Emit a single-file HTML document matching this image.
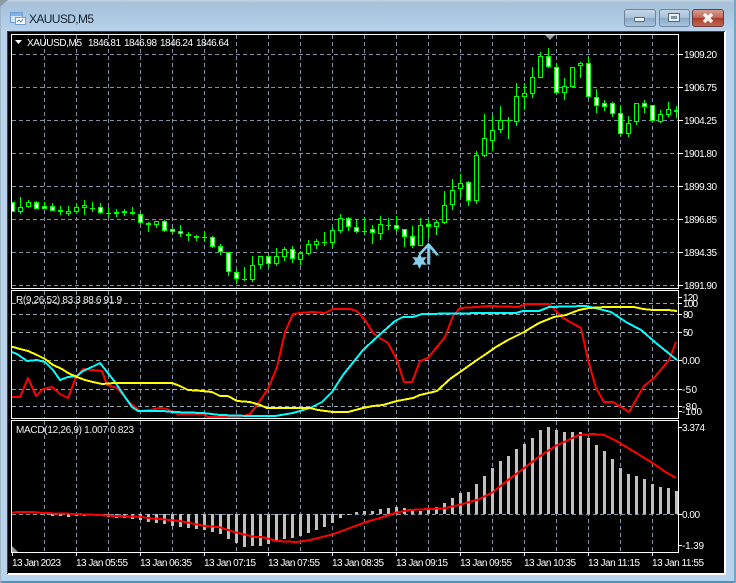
<!DOCTYPE html>
<html><head><meta charset="utf-8"><style>
html,body{margin:0;padding:0;background:#b9d2ea}
#w{position:relative;width:736px;height:583px;overflow:hidden;background:linear-gradient(180deg,#c2d2df 0,#a8c2d9 3px,#a9c5df 12px,#bad3ec 32px,#bad3ec 100%)}
#w>svg{position:absolute;left:0;top:0}
text{font-family:"Liberation Sans",sans-serif;font-size:10px;fill:#fff}
.t{font-size:12px;fill:#16202c}
.g{font-size:10px;fill:#f0f0f0}
</style></head><body><div id="w">
<svg width="736" height="583" viewBox="0 0 736 583">
<defs>
<linearGradient id="b" x1="0" y1="0" x2="0" y2="1"><stop offset="0" stop-color="#c5d6e6"/><stop offset=".48" stop-color="#a9c3da"/><stop offset=".5" stop-color="#8aa9c6"/><stop offset="1" stop-color="#a9c6e0"/></linearGradient>
<linearGradient id="r" x1="0" y1="0" x2="0" y2="1"><stop offset="0" stop-color="#d9a095"/><stop offset=".48" stop-color="#c0685a"/><stop offset=".5" stop-color="#a83a2a"/><stop offset="1" stop-color="#c46a55"/></linearGradient>
<clipPath id="c1"><rect x="12" y="35" width="666" height="253"/></clipPath>
<clipPath id="c2"><rect x="12" y="291" width="666" height="127"/></clipPath>
</defs>
<!-- window edges -->
<rect x="0" y="581" width="736" height="2" fill="#3a9dbb"/>
<rect x="734" y="0" width="2" height="583" fill="#6fa8c4"/>
<rect x="0" y="0" width="1" height="583" fill="#9fb6c8"/>
<path d="M0 0h8L0 7z" fill="#8a9aa6"/>
<!-- title icon -->
<path d="M10.5 12.5h12v10h-12z" fill="#d5e6f7" stroke="#6d9fd6"/>
<path d="M11 13h11v3H11z" fill="#7fb0e8"/>
<path d="M15.5 17.500h10v7h-10z" fill="#fff" stroke="#6d9fd6"/>
<path d="M17 22l2-2 2 2 2-3" fill="none" stroke="#4f8ad0"/>
<text class="t" x="29" y="23" textLength="65" lengthAdjust="spacing">XAUUSD,M5</text>
<!-- buttons -->
<rect x="624.500" y="9.500" width="31" height="17" rx="2.500" fill="url(#b)" stroke="#6d849b"/>
<rect x="659.500" y="9.500" width="30" height="17" rx="2.500" fill="url(#b)" stroke="#6d849b"/>
<rect x="692.500" y="9.500" width="31" height="17" rx="2.500" fill="url(#r)" stroke="#6b3a3a"/>
<rect x="634.500" y="17.500" width="10" height="4" rx="1" fill="#eef2f6" stroke="#55677a"/>
<rect x="668.500" y="13.500" width="11" height="8" fill="#e8eef4" stroke="#55677a"/>
<rect x="671" y="16" width="6" height="3" fill="#7d93a8"/>
<path d="M704 14L712 22M712 14L704 22" stroke="#f2f2f2" stroke-width="3.600" fill="none"/>
<!-- client -->
<rect x="7" y="31" width="719" height="544" fill="#fff"/>
<rect x="7" y="31" width="718" height="1" fill="#3a3f44"/>
<rect x="7" y="31" width="1" height="543" fill="#3a3f44"/>
<rect x="8" y="32" width="716" height="541" fill="#000"/>
<!-- grid -->
<g stroke="#8292a4" fill="none" stroke-dasharray="4 3" shape-rendering="crispEdges">
<path d="M12 54.500H678M12 87.500H678M12 120.500H678M12 153.500H678M12 186.500H678M12 219.500H678M12 252.500H678M12 285.500H678"/>
<path d="M44.500 35V288M76.500 35V288M108.500 35V288M140.500 35V288M172.500 35V288M204.500 35V288M236.500 35V288M268.500 35V288M300.500 35V288M332.500 35V288M364.500 35V288M396.500 35V288M428.500 35V288M460.500 35V288M492.500 35V288M524.500 35V288M556.500 35V288M588.500 35V288M620.500 35V288M652.500 35V288"/>
<path d="M12 303.500H678M12 314.500H678M12 332.500H678M12 360.500H678M12 389.500H678M12 406.500H678" stroke="#98a6b4"/>
<path d="M44.500 291V418M76.500 291V418M108.500 291V418M140.500 291V418M172.500 291V418M204.500 291V418M236.500 291V418M268.500 291V418M300.500 291V418M332.500 291V418M364.500 291V418M396.500 291V418M428.500 291V418M460.500 291V418M492.500 291V418M524.500 291V418M556.500 291V418M588.500 291V418M620.500 291V418M652.500 291V418"/>
<path d="M44.500 421V552M76.500 421V552M108.500 421V552M140.500 421V552M172.500 421V552M204.500 421V552M236.500 421V552M268.500 421V552M300.500 421V552M332.500 421V552M364.500 421V552M396.500 421V552M428.500 421V552M460.500 421V552M492.500 421V552M524.500 421V552M556.500 421V552M588.500 421V552M620.500 421V552M652.500 421V552"/>
<path d="M12 514.500H678"/>
</g>
<!-- candles -->
<g clip-path="url(#c1)" shape-rendering="crispEdges">
<path fill="none" stroke="#0f0" d="M20.500 197V214M28.500 200V208M36.500 201V209M44.500 202V209M52.500 203V211M60.500 206V215M68.500 206V216M76.500 204V213M84.500 200V215M92.500 202V212M100.500 203V214M108.500 207V217M116.500 209V217M124.500 209V216M132.500 207V215M140.500 214V224M148.500 222V232M156.500 221V228M164.500 220V232M172.500 227V234M180.500 225V237M188.500 232V241M196.500 235V241M204.500 232V241M212.500 236V248M220.500 244V255M228.500 252V276M236.500 270V283M244.500 267V281M252.500 256V282M260.500 256V269M268.500 256V267M276.500 248V266M284.500 247V261M292.500 246V263M300.500 251V265M308.500 240V255M316.500 239V249M324.500 232V246M332.500 227V247M340.500 214V233M348.500 217V231M356.500 219V233M364.500 218V235M372.500 225V244M380.500 216V240M388.500 218V230M396.500 216V232M404.500 229V247M412.500 226V248M420.500 218V246M428.500 219V238M436.500 220V235M444.500 191V224M452.500 179V210M460.500 174V198M468.500 181V206M476.500 151V204M484.500 114V157M492.500 116V151M500.500 106V133M508.500 117V139M516.500 83V126M524.500 83V110M532.500 67V98M540.500 52V78M548.500 48V68M556.500 63V94M564.500 78V100M572.500 67V87M580.500 62V78M588.500 58V98M596.500 89V113M604.500 100V111M612.500 102V117M620.500 106V136M628.500 116V137M636.500 103V125M644.500 100V113M652.500 105V121M660.500 110V123M668.500 102V117M676.500 106V118"/>
<path fill="none" stroke="#0f0" stroke-width="2" d="M58 211h5M122 212h5M186 235h5M194 237h5M674 111h5"/>
<path fill="none" stroke="#0f0" d="M90 208.500h5M106 213.500h5M202 237.500h5M242 279.500h5M322 242.500h5M362 231.500h5M386 225.500h5M506 120.500h5"/>
<path fill="#fff" stroke="#0f0" d="M10.500 202.500h4v9h-4zM34.500 202.500h4v6h-4zM42.500 206.500h4v2h-4zM50.500 206.500h4v4h-4zM98.500 207.500h4v5h-4zM114.500 212.500h4v1h-4zM130.500 212.500h4v1h-4zM138.500 214.500h4v8h-4zM146.500 223.500h4v1h-4zM162.500 221.500h4v9h-4zM170.500 229.500h4v2h-4zM178.500 231.500h4v2h-4zM210.500 237.500h4v9h-4zM218.500 246.500h4v5h-4zM226.500 252.500h4v19h-4zM234.500 272.500h4v6h-4zM266.500 256.500h4v7h-4zM290.500 249.500h4v9h-4zM346.500 218.500h4v8h-4zM354.500 227.500h4v4h-4zM370.500 229.500h4v3h-4zM394.500 225.500h4v3h-4zM402.500 229.500h4v7h-4zM410.500 236.500h4v9h-4zM426.500 224.500h4v2h-4zM466.500 182.500h4v18h-4zM546.500 56.500h4v10h-4zM554.500 67.500h4v25h-4zM586.500 63.500h4v33h-4zM594.500 97.500h4v8h-4zM602.500 103.500h4v3h-4zM610.500 103.500h4v10h-4zM618.500 113.500h4v20h-4zM642.500 103.500h4v3h-4zM650.500 105.500h4v15h-4z"/>
<path fill="#000" stroke="#0f0" d="M18.500 207.500h4v4h-4zM26.500 202.500h4v4h-4zM66.500 211.500h4v2h-4zM74.500 207.500h4v4h-4zM82.500 205.500h4v2h-4zM154.500 221.500h4v3h-4zM250.500 265.500h4v14h-4zM258.500 256.500h4v8h-4zM274.500 256.500h4v7h-4zM282.500 249.500h4v7h-4zM298.500 253.500h4v6h-4zM306.500 244.500h4v9h-4zM314.500 241.500h4v3h-4zM330.500 230.500h4v12h-4zM338.500 218.500h4v12h-4zM378.500 224.500h4v9h-4zM418.500 225.500h4v20h-4zM434.500 222.500h4v4h-4zM442.500 205.500h4v17h-4zM450.500 190.500h4v14h-4zM458.500 183.500h4v5h-4zM474.500 155.500h4v45h-4zM482.500 138.500h4v17h-4zM490.500 130.500h4v10h-4zM498.500 120.500h4v9h-4zM514.500 96.500h4v25h-4zM522.500 93.500h4v3h-4zM530.500 77.500h4v16h-4zM538.500 56.500h4v21h-4zM562.500 86.500h4v6h-4zM570.500 67.500h4v19h-4zM578.500 63.500h4v2h-4zM626.500 123.500h4v10h-4zM634.500 103.500h4v18h-4zM658.500 114.500h4v7h-4zM666.500 109.500h4v5h-4z"/>
</g>
<!-- arrow + star -->
<path d="M430 245V265M430 245L439 256" fill="none" stroke="#3d5566" stroke-width="1.500"/>
<path d="M428.500 244V264.500M419.500 254.500L428.500 244.500L437.500 255" fill="none" stroke="#87ceeb" stroke-width="2.600"/>
<path d="M419.500 253l2.200 4.500 5-.5-3 4 3 4-5-.5-2.200 4.500-2.200-4.500-5 .5 3-4-3-4 5 .5z" fill="#87ceeb"/>
<!-- RSI lines -->
<g clip-path="url(#c2)" fill="none" stroke-width="2" stroke-linejoin="round" shape-rendering="crispEdges">
<path stroke="#f00" d="M12 397L20 397L28 378L36 396L43 389L52 387L60 394L68 398L76 377L83 369L102 371L107 385L117 388L130 403L140 411L150 410L160 408L167 409L177 414L203 414L208 417L240 417L250 414L257 405L268 389L277 367L285 332L293 314L300 313L312 312L325 313L333 309L350 309L357 311L365 320L373 333L378 337L388 343L397 360L404 382L412 382L420 361L428 358L445 337L453 316L460 308L477 307L490 306L518 307L526 304L549 304L563 318L581 328L588 360L596 388L604 402L613 402L629 412L644 386L654 378L669 360L676 342"/>
<path stroke="#0ff" d="M12 352L17 354L27 361L37 360L45 362L53 370L60 380L68 377L77 376L83 371L92 367L100 363L115 382L125 397L132 407L138 411L163 411L173 412L203 413L220 415L250 416L275 416L293 413L310 408L322 402L332 392L343 375L363 350L377 337L395 321L403 317L413 317L422 314L486 313L516 313L523 311L539 311L549 307L586 306L599 309L611 312L626 322L641 330L656 343L677 360"/>
<path stroke="#ff0" d="M12 346.700L20 349L28 351L37 355L45 359L53 365L62 369L68 373L77 377L85 380L93 382L102 384L115 383L172 383L180 386L188 390L203 391L212 392L220 396L228 396L237 401L250 402L260 405L267 408L310 408L318 410L333 412L348 412L363 408L373 406L383 405L397 401L413 398L420 395L437 391L450 379L460 372L477 360L486 354L496 347L508 340L524 332L539 323L554 317L566 315L579 310L589 308L606 307L634 307L643 309L653 310L668 310L677 311"/>
</g>
<!-- MACD -->
<g shape-rendering="crispEdges" fill="none" stroke="#c0c0c0" stroke-width="3">
<path d="M52.500 514V516M60.500 514V516M68.500 514V517M76.500 514V516M84.500 514V516M92.500 514V515M100.500 514V516M108.500 514V517M116.500 514V518M124.500 514V518M132.500 514V519M140.500 514V520M148.500 514V522M156.500 514V523M164.500 514V524M172.500 514V526M180.500 514V527M188.500 514V528M196.500 514V529M204.500 514V530M212.500 514V532M220.500 514V534M228.500 514V539M236.500 514V543M244.500 514V547M252.500 514V546M260.500 514V546M268.500 514V544M276.500 514V541M284.500 514V539M292.500 514V538M300.500 514V536M308.500 514V533M316.500 514V530M324.500 514V527M332.500 514V523M340.500 514V518M348.500 514V515"/>
<path d="M356.500 514V512M364.500 514V511M372.500 514V511M380.500 514V509M388.500 514V508M396.500 514V507M404.500 514V508M412.500 514V510M420.500 514V511M428.500 514V509M436.500 514V507M444.500 514V503M452.500 514V498M460.500 514V493M468.500 514V492M476.500 514V484M484.500 514V476M492.500 514V468M500.500 514V461M508.500 514V456M516.500 514V449M524.500 514V444M532.500 514V438M540.500 514V430M548.500 514V427M556.500 514V430M564.500 514V432M572.500 514V432M580.500 514V432M588.500 514V438M596.500 514V445M604.500 514V451M612.500 514V459M620.500 514V468M628.500 514V474M636.500 514V476M644.500 514V479M652.500 514V484M660.500 514V487M668.500 514V488M676.500 514V491"/>
</g>
<path fill="none" stroke="#f00" stroke-width="2" stroke-linejoin="round" shape-rendering="crispEdges" d="M12 512.300L33 512L43 513L68 513.700L93 514.700L115 516L140 516.700L148 518L163 519.300L180 521L203 525.700L220 527.300L233 531.700L253 536.700L263 537.300L277 541L297 542L310 540L333 534.300L366 522L379 518.300L396 512.700L409 510L429 509L444 508.300L459 505L479 499.300L493 492L509 479.300L526 466.700L539 456.700L556 445.700L579 435L593 434L604 435L616 440.700L633 451L653 463.300L666 472.300L676 478"/>
<path d="M12 546l6 6h-6z" fill="#8d9aa6"/>
<!-- frames -->
<g fill="none" stroke="#fff" shape-rendering="crispEdges">
<rect x="11.500" y="34.500" width="667" height="254"/>
<rect x="11.500" y="290.500" width="667" height="128"/>
<rect x="11.500" y="420.500" width="667" height="132"/>
<path d="M679 54.500h4M679 87.500h4M679 120.500h4M679 153.500h4M679 186.500h4M679 219.500h4M679 252.500h4M679 285.500h4M679 297.500h3M679 303.500h3M679 314.500h3M679 332.500h3M679 360.500h3M679 389.500h3M679 406.500h3M679 411.500h3M679 427.500h3M679 514.500h3M679 545.500h3"/>
<path d="M12.500 553v3M76.500 553v3M140.500 553v3M204.500 553v3M268.500 553v3M332.500 553v3M396.500 553v3M460.500 553v3M524.500 553v3M588.500 553v3M652.500 553v3"/>
</g>
<path d="M545 35h10l-5 5z" fill="#8d9aa6"/>
<path d="M15 40h7l-3.500 4z" fill="#fff"/>
<!-- texts -->
<text x="27" y="46" textLength="55" lengthAdjust="spacing">XAUUSD,M5</text>
<text x="88" y="46" textLength="33" lengthAdjust="spacing">1846.81</text>
<text x="124" y="46" textLength="33" lengthAdjust="spacing">1846.98</text>
<text x="160" y="46" textLength="33" lengthAdjust="spacing">1846.24</text>
<text x="196" y="46" textLength="33" lengthAdjust="spacing">1846.64</text>
<text class="g" x="16" y="303" textLength="106" lengthAdjust="spacing">R(9,26,52) 83.3 88.6 91.9</text>
<text class="g" x="16" y="433" textLength="118" lengthAdjust="spacing">MACD(12,26,9) 1.007 0.823</text>
<g>
<text x="684" y="58" textLength="33" lengthAdjust="spacing">1909.20</text>
<text x="684" y="91" textLength="33" lengthAdjust="spacing">1906.75</text>
<text x="684" y="124" textLength="33" lengthAdjust="spacing">1904.25</text>
<text x="684" y="157" textLength="33" lengthAdjust="spacing">1901.80</text>
<text x="684" y="190" textLength="33" lengthAdjust="spacing">1899.30</text>
<text x="684" y="223" textLength="33" lengthAdjust="spacing">1896.85</text>
<text x="684" y="256" textLength="33" lengthAdjust="spacing">1894.35</text>
<text x="684" y="289" textLength="33" lengthAdjust="spacing">1891.90</text>
<text x="683" y="301" textLength="15" lengthAdjust="spacing">120</text>
<text x="683" y="307" textLength="15" lengthAdjust="spacing">100</text>
<text x="683" y="318" textLength="10" lengthAdjust="spacing">80</text>
<text x="683" y="336" textLength="10" lengthAdjust="spacing">50</text>
<text x="682" y="364" textLength="18" lengthAdjust="spacing">0.00</text>
<text x="682" y="393" textLength="15" lengthAdjust="spacing">-50</text>
<text x="682" y="410" textLength="15" lengthAdjust="spacing">-80</text>
<text x="682" y="415" textLength="20" lengthAdjust="spacing">-100</text>
<text x="682" y="431" textLength="23" lengthAdjust="spacing">3.374</text>
<text x="682" y="518" textLength="18" lengthAdjust="spacing">0.00</text>
<text x="682" y="549" textLength="22" lengthAdjust="spacing">-1.39</text>
</g>
<g>
<text x="12" y="566" textLength="49" lengthAdjust="spacing">13 Jan 2023</text>
<text x="76" y="566" textLength="52" lengthAdjust="spacing">13 Jan 05:55</text>
<text x="140" y="566" textLength="52" lengthAdjust="spacing">13 Jan 06:35</text>
<text x="204" y="566" textLength="52" lengthAdjust="spacing">13 Jan 07:15</text>
<text x="268" y="566" textLength="52" lengthAdjust="spacing">13 Jan 07:55</text>
<text x="332" y="566" textLength="52" lengthAdjust="spacing">13 Jan 08:35</text>
<text x="396" y="566" textLength="52" lengthAdjust="spacing">13 Jan 09:15</text>
<text x="460" y="566" textLength="52" lengthAdjust="spacing">13 Jan 09:55</text>
<text x="524" y="566" textLength="52" lengthAdjust="spacing">13 Jan 10:35</text>
<text x="588" y="566" textLength="52" lengthAdjust="spacing">13 Jan 11:15</text>
<text x="652" y="566" textLength="52" lengthAdjust="spacing">13 Jan 11:55</text>
</g>
</svg>
</div></body></html>
